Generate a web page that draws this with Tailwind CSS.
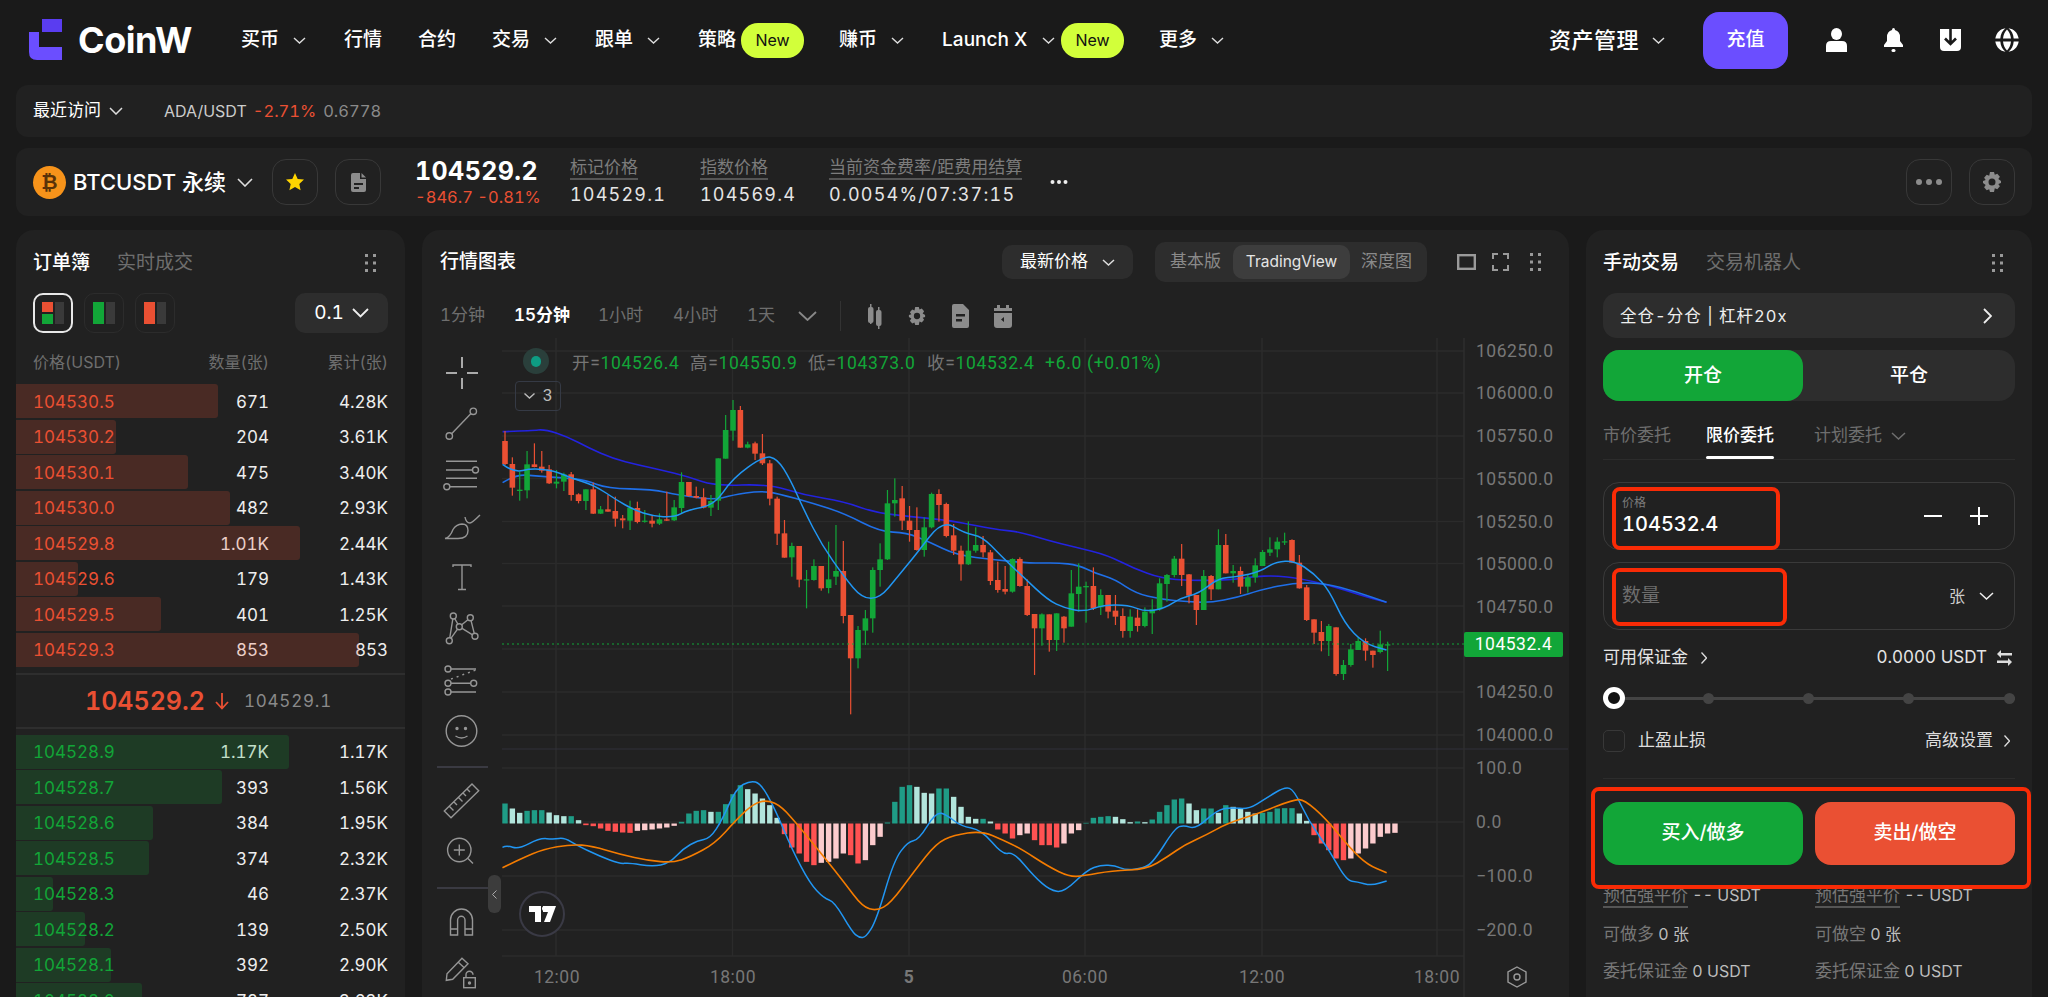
<!DOCTYPE html>
<html lang="zh-CN">
<head>
    <meta charset="UTF-8">
    <title>BTCUSDT 永续 - CoinW</title>
    <script src="https://cdn.jsdelivr.net/npm/@tailwindcss/browser@4"></script>
</head>
<body class="h-[997px] overflow-hidden bg-[#1a1a1a] text-white tabular-nums font-[Inter,'Noto_Sans_CJK_SC',sans-serif]">

    <!-- top nav -->
    <header class="flex h-[80px] items-center pl-[28px] pr-[29px] text-[19px] font-medium whitespace-nowrap">
        <svg class="h-[42px] w-[35px] shrink-0" viewBox="0 0 35 42"><path fill="#5a3df0" d="M14 0h20v13H14z"/><path fill="#6b4eff" d="M1 13h10v15h23v13H9q-8 0-8-8z"/></svg>
        <span class="ml-[15px] w-[113px] text-[36px] font-bold tracking-[-0.5px]">CoinW</span>
        <span class="ml-[50px]">买币</span>
        <svg class="ml-[14px] h-[7px] w-[13px]" viewBox="0 0 13 7" fill="none" stroke="#ddd" stroke-width="1.4"><path d="M1 1l5.500 5 5.500-5"/></svg>
        <span class="ml-[38px]">行情</span>
        <span class="ml-[36px]">合约</span>
        <span class="ml-[36px]">交易</span>
        <svg class="ml-[14px] h-[7px] w-[13px]" viewBox="0 0 13 7" fill="none" stroke="#ddd" stroke-width="1.4"><path d="M1 1l5.500 5 5.500-5"/></svg>
        <span class="ml-[38px]">跟单</span>
        <svg class="ml-[14px] h-[7px] w-[13px]" viewBox="0 0 13 7" fill="none" stroke="#ddd" stroke-width="1.4"><path d="M1 1l5.500 5 5.500-5"/></svg>
        <span class="ml-[38px]">策略</span>
        <span class="ml-[5px] flex h-[35px] w-[63px] items-center justify-center rounded-[17px] bg-[#d2ff3a] text-[16px] font-normal text-[#111]">New</span>
        <span class="ml-[35px]">赚币</span>
        <svg class="ml-[14px] h-[7px] w-[13px]" viewBox="0 0 13 7" fill="none" stroke="#ddd" stroke-width="1.4"><path d="M1 1l5.500 5 5.500-5"/></svg>
        <span class="ml-[38px] w-[92px] text-[19px]">Launch X</span>
        <svg class="ml-[8px] h-[7px] w-[13px]" viewBox="0 0 13 7" fill="none" stroke="#ddd" stroke-width="1.4"><path d="M1 1l5.500 5 5.500-5"/></svg>
        <span class="ml-[6px] flex h-[35px] w-[63px] items-center justify-center rounded-[17px] bg-[#d2ff3a] text-[16px] font-normal text-[#111]">New</span>
        <span class="ml-[35px]">更多</span>
        <svg class="ml-[14px] h-[7px] w-[13px]" viewBox="0 0 13 7" fill="none" stroke="#ddd" stroke-width="1.4"><path d="M1 1l5.500 5 5.500-5"/></svg>

        <span class="ml-auto w-[90px] text-[22px] tracking-[0.5px]">资产管理</span>
        <svg class="ml-[13px] h-[7px] w-[13px]" viewBox="0 0 13 7" fill="none" stroke="#ddd" stroke-width="1.4"><path d="M1 1l5.500 5 5.500-5"/></svg>
        <button class="ml-[38px] h-[57px] w-[85px] rounded-[16px] bg-[#6b4eff] text-[19px]">充值</button>
        <svg class="ml-[38px] h-[24px] w-[21px]" viewBox="0 0 21 24" fill="#fff"><ellipse cx="10.500" cy="6" rx="5.500" ry="6"/><path d="M0 24v-6q0-5 5-5h11q5 0 5 5v6z"/></svg>
        <svg class="ml-[36px] h-[24px] w-[21px]" viewBox="0 0 21 24" fill="#fff"><path d="M10.500 0q1.500 0 1.500 2 5 1.500 5 7v4l3 4v2H1v-2l3-4V9q0-5.500 5-7 0-2 1.500-2z"/><rect x="8.500" y="21" width="4" height="3" rx="1.500"/></svg>
        <svg class="ml-[36px] h-[22px] w-[21px]" viewBox="0 0 21 22"><path fill="#fff" d="M0 0h21v18q0 4-4 4H4q-4 0-4-4z"/><path fill="none" stroke="#1a1a1a" stroke-width="2.600" d="M10.500 0v14M5 9.500l5.500 5.500 5.500-5.500"/></svg>
        <svg class="ml-[34px] h-[24px] w-[24px]" viewBox="0 0 24 24" fill="#fff"><path d="M10.500 0.200C5 1 1.500 4.500 0.300 10.500h5C5.700 6 7.500 2.500 10.500 0.200zM13.500 0.200c3 2.300 4.800 5.800 5.200 10.300h5C22.500 4.500 19 1 13.500 0.200zM8 10.500h8C15.600 6.500 14 3.500 12 1.500 10 3.500 8.400 6.500 8 10.500zM0.300 13.500C1.500 19.500 5 23 10.500 23.800 7.500 21.500 5.700 18 5.300 13.500zM8 13.500c.4 4 2 7 4 9 2-2 3.600-5 4-9zM18.700 13.500c-.4 4.500-2.200 8-5.200 10.300 5.500-.8 9-4.300 10.200-10.300z"/></svg>
    </header>

    <!-- recent -->
    <div class="mx-4 mt-[5px] flex h-[52px] items-center rounded-xl bg-[#212121] pl-[17px] text-[17px] whitespace-nowrap">
        <span>最近访问</span>
        <svg class="ml-[8px] h-[8px] w-[14px]" viewBox="0 0 14 8" fill="none" stroke="#ddd" stroke-width="1.5"><path d="M1 1l6 6 6-6"/></svg>
        <span class="ml-[41px] text-[16px] text-[#ccc]">ADA/USDT</span>
        <span class="ml-[6px] text-[16.500px] text-[#ea5033]">-2.71%</span>
        <span class="ml-[7px] text-[16.500px] text-[#8a8a8a]">0.6778</span>
    </div>

    <!-- ticker -->
    <div class="mx-4 mt-[11px] flex h-[68px] items-center rounded-xl bg-[#212121] pl-[17px] pr-[17px] whitespace-nowrap">
        <span class="flex h-[33px] w-[33px] items-center justify-center rounded-full bg-[#f7931a] text-[20px] font-bold text-[#5a3208] font-[Liberation_Sans,DejaVu_Sans,sans-serif]">₿</span>
        <span class="ml-[7px] w-[156px] text-[22px] font-medium">BTCUSDT 永续</span>
        <svg class="ml-[8px] h-[9px] w-[16px]" viewBox="0 0 16 9" fill="none" stroke="#ddd" stroke-width="1.6"><path d="M1 1l7 7 7-7"/></svg>
        <span class="ml-[19px] flex h-[46px] w-[46px] items-center justify-center rounded-[14px] border border-[#383838]">
            <svg class="h-[18px] w-[18px]" viewBox="0 0 18 18" fill="#ffd400"><path d="M9 0l2.700 5.900 6.300.7-4.700 4.300 1.300 6.400L9 14.100l-5.600 3.200 1.300-6.400L0 6.600l6.300-.7z"/></svg>
        </span>
        <span class="ml-[17px] flex h-[46px] w-[46px] items-center justify-center rounded-[14px] border border-[#383838]">
            <svg class="h-[19px] w-[15px]" viewBox="0 0 15 19" fill="#8c8c8c"><path d="M2 0h7v6h6v11q0 2-2 2H2q-2 0-2-2V2q0-2 2-2zM3 10v2h9v-2zM3 14v2h5v-2z" fill-rule="evenodd"/><path d="M10.500 0L15 4.500h-4.500z"/></svg>
        </span>
        <div class="-ml-[1px] pl-[35px] w-[160px]">
            <div class="text-[25px] leading-[30px] font-bold tracking-[0.4px]">104529.2</div>
            <div class="text-[16.500px] leading-[22px] text-[#ea5033]">-846.7 -0.81%</div>
        </div>
        <div class="ml-[30px] w-[95px]">
            <div class="w-fit border-b-2 border-[#555] text-[17px] leading-[21px] text-[#7c7c7c]">标记价格</div>
            <div class="mt-[3px] text-[18px] leading-[24px] tracking-[1.2px] text-[#e5e5e5]">104529.1</div>
        </div>
        <div class="ml-[35px] w-[95px]">
            <div class="w-fit border-b-2 border-[#555] text-[17px] leading-[21px] text-[#7c7c7c]">指数价格</div>
            <div class="mt-[3px] text-[18px] leading-[24px] tracking-[1.2px] text-[#e5e5e5]">104569.4</div>
        </div>
        <div class="ml-[34px] w-[221px]">
            <div class="w-fit border-b-2 border-[#555] text-[17px] leading-[21px] text-[#7c7c7c]">当前资金费率/距费用结算</div>
            <div class="mt-[3px] text-[18px] leading-[24px] tracking-[1.2px] text-[#e5e5e5]">0.0054%/07:37:15</div>
        </div>
        <svg class="h-[4px] w-[18px]" viewBox="0 0 18 4" fill="#eee"><circle cx="2.500" cy="2" r="2"/><circle cx="9" cy="2" r="2"/><circle cx="15.500" cy="2" r="2"/></svg>
        <span class="ml-auto flex h-[46px] w-[46px] items-center justify-center rounded-[14px] border border-[#383838]">
            <svg class="h-[6px] w-[28px]" viewBox="0 0 28 6" fill="#8c8c8c"><circle cx="4" cy="3" r="3"/><circle cx="14" cy="3" r="3"/><circle cx="24" cy="3" r="3"/></svg>
        </span>
        <span class="ml-[17px] flex h-[46px] w-[46px] items-center justify-center rounded-[14px] border border-[#383838]">
            <svg class="h-[20px] w-[20px]" viewBox="0 0 20 20" fill="#8c8c8c"><path fill-rule="evenodd" d="M8 0h4l.8 2.800 2.500-1.100 2.600 3-1.600 2.400L19 9v2l-2.700.9 1.600 2.400-2.600 3-2.500-1.100L12 20H8l-.8-2.800-2.500 1.100-2.600-3 1.600-2.400L1 11V9l2.700-.9-1.600-2.400 2.600-3 2.500 1.100zM10 6.500a3.500 3.500 0 100 7 3.500 3.500 0 000-7z"/></svg>
        </span>
    </div>

    <!-- main -->
    <main class="mx-4 mt-[14px] flex h-[767px] gap-[17px]">

        <!-- order book -->
        <section class="w-[389px] shrink-0 overflow-hidden rounded-t-[18px] bg-[#212121]">
            <div class="flex h-[63px] items-center px-[17px] pt-[3px] text-[19px]">
                <span class="font-medium">订单簿</span>
                <span class="ml-[27px] text-[#6e6e6e]">实时成交</span>
                <svg class="ml-auto mr-[12px] h-[18px] w-[11px]" viewBox="0 0 11 18" fill="#999"><rect width="3" height="3"/><rect x="8" width="3" height="3"/><rect y="7.500" width="3" height="3"/><rect x="8" y="7.500" width="3" height="3"/><rect y="15" width="3" height="3"/><rect x="8" y="15" width="3" height="3"/></svg>
            </div>
            <div class="flex h-[40px] items-center px-[17px]">
                <span class="flex h-[40px] w-[40px] items-center justify-center rounded-[10px] border-2 border-[#e8e8e8]">
                    <svg class="h-[22px] w-[22px]" viewBox="0 0 22 22"><rect width="11" height="10" fill="#ea5033"/><rect y="12" width="11" height="10" fill="#12a638"/><rect x="13" width="9" height="22" fill="#3a3a3a"/></svg>
                </span>
                <span class="ml-[11px] flex h-[40px] w-[40px] items-center justify-center rounded-[10px] border border-[#2c2c2c]">
                    <svg class="h-[22px] w-[22px]" viewBox="0 0 22 22"><rect width="11" height="22" fill="#12a638"/><rect x="13" width="9" height="22" fill="#3a3a3a"/></svg>
                </span>
                <span class="ml-[11px] flex h-[40px] w-[40px] items-center justify-center rounded-[10px] border border-[#2c2c2c]">
                    <svg class="h-[22px] w-[22px]" viewBox="0 0 22 22"><rect width="11" height="22" fill="#ea5033"/><rect x="13" width="9" height="22" fill="#3a3a3a"/></svg>
                </span>
                <span class="ml-auto flex h-[40px] w-[93px] items-center justify-center gap-[8px] rounded-[10px] bg-[#2d2d2d] text-[19px]">0.1
                    <svg class="h-[10px] w-[17px]" viewBox="0 0 17 10" fill="none" stroke="#eee" stroke-width="1.800"><path d="M1 1l7.500 7.500L16 1"/></svg>
                </span>
            </div>
            <div class="grid h-[51px] grid-cols-[1fr_96px_119px] items-center px-[17px] pt-[7px] text-[16px] text-[#6e6e6e]">
                <span>价格(USDT)</span><span class="text-right">数量(张)</span><span class="text-right">累计(张)</span>
            </div>

            <div class="text-[17px] text-[#eee]">
                <div class="relative mb-[1.500px] grid h-[34px] grid-cols-[1fr_96px_119px] items-center px-[17px] pt-[3px]"><span class="text-[#ea5033]">104530.5</span><span class="text-right">671</span><span class="text-right">4.28K</span><i class="absolute inset-y-0 left-0 rounded-r-[3px] bg-[#ea5033]/20" style="width:202px"></i></div>
                <div class="relative mb-[1.500px] grid h-[34px] grid-cols-[1fr_96px_119px] items-center px-[17px] pt-[3px]"><span class="text-[#ea5033]">104530.2</span><span class="text-right">204</span><span class="text-right">3.61K</span><i class="absolute inset-y-0 left-0 rounded-r-[3px] bg-[#ea5033]/20" style="width:100px"></i></div>
                <div class="relative mb-[1.500px] grid h-[34px] grid-cols-[1fr_96px_119px] items-center px-[17px] pt-[3px]"><span class="text-[#ea5033]">104530.1</span><span class="text-right">475</span><span class="text-right">3.40K</span><i class="absolute inset-y-0 left-0 rounded-r-[3px] bg-[#ea5033]/20" style="width:172px"></i></div>
                <div class="relative mb-[1.500px] grid h-[34px] grid-cols-[1fr_96px_119px] items-center px-[17px] pt-[3px]"><span class="text-[#ea5033]">104530.0</span><span class="text-right">482</span><span class="text-right">2.93K</span><i class="absolute inset-y-0 left-0 rounded-r-[3px] bg-[#ea5033]/20" style="width:214px"></i></div>
                <div class="relative mb-[1.500px] grid h-[34px] grid-cols-[1fr_96px_119px] items-center px-[17px] pt-[3px]"><span class="text-[#ea5033]">104529.8</span><span class="text-right">1.01K</span><span class="text-right">2.44K</span><i class="absolute inset-y-0 left-0 rounded-r-[3px] bg-[#ea5033]/20" style="width:284px"></i></div>
                <div class="relative mb-[1.500px] grid h-[34px] grid-cols-[1fr_96px_119px] items-center px-[17px] pt-[3px]"><span class="text-[#ea5033]">104529.6</span><span class="text-right">179</span><span class="text-right">1.43K</span><i class="absolute inset-y-0 left-0 rounded-r-[3px] bg-[#ea5033]/20" style="width:62px"></i></div>
                <div class="relative mb-[1.500px] grid h-[34px] grid-cols-[1fr_96px_119px] items-center px-[17px] pt-[3px]"><span class="text-[#ea5033]">104529.5</span><span class="text-right">401</span><span class="text-right">1.25K</span><i class="absolute inset-y-0 left-0 rounded-r-[3px] bg-[#ea5033]/20" style="width:145px"></i></div>
                <div class="relative grid h-[34px] grid-cols-[1fr_96px_119px] items-center px-[17px] pt-[3px]"><span class="text-[#ea5033]">104529.3</span><span class="text-right">853</span><span class="text-right">853</span><i class="absolute inset-y-0 left-0 rounded-r-[3px] bg-[#ea5033]/20" style="width:343px"></i></div>

                <div class="mt-[6px] flex h-[56px] items-center justify-center border-y-2 border-[#2e2e2e] pr-[4px] pt-[2px]">
                    <span class="text-[25px] font-semibold text-[#ea5033]">104529.2</span>
                    <svg class="ml-[10px] h-[17px] w-[14px]" viewBox="0 0 14 17" fill="none" stroke="#ea5033" stroke-width="1.800"><path d="M7 0v15M1 9l6 6.500L13 9"/></svg>
                    <span class="ml-[15px] text-[17px] tracking-[0.8px] text-[#8a8a8a]">104529.1</span>
                </div>

                <div class="relative mb-[1.500px] mt-[6px] grid h-[34px] grid-cols-[1fr_96px_119px] items-center px-[17px] pt-[3px]"><span class="text-[#12a638]">104528.9</span><span class="text-right">1.17K</span><span class="text-right">1.17K</span><i class="absolute inset-y-0 left-0 rounded-r-[3px] bg-[#12a638]/20" style="width:273px"></i></div>
                <div class="relative mb-[1.500px] grid h-[34px] grid-cols-[1fr_96px_119px] items-center px-[17px] pt-[3px]"><span class="text-[#12a638]">104528.7</span><span class="text-right">393</span><span class="text-right">1.56K</span><i class="absolute inset-y-0 left-0 rounded-r-[3px] bg-[#12a638]/20" style="width:206px"></i></div>
                <div class="relative mb-[1.500px] grid h-[34px] grid-cols-[1fr_96px_119px] items-center px-[17px] pt-[3px]"><span class="text-[#12a638]">104528.6</span><span class="text-right">384</span><span class="text-right">1.95K</span><i class="absolute inset-y-0 left-0 rounded-r-[3px] bg-[#12a638]/20" style="width:137px"></i></div>
                <div class="relative mb-[1.500px] grid h-[34px] grid-cols-[1fr_96px_119px] items-center px-[17px] pt-[3px]"><span class="text-[#12a638]">104528.5</span><span class="text-right">374</span><span class="text-right">2.32K</span><i class="absolute inset-y-0 left-0 rounded-r-[3px] bg-[#12a638]/20" style="width:133px"></i></div>
                <div class="relative mb-[1.500px] grid h-[34px] grid-cols-[1fr_96px_119px] items-center px-[17px] pt-[3px]"><span class="text-[#12a638]">104528.3</span><span class="text-right">46</span><span class="text-right">2.37K</span><i class="absolute inset-y-0 left-0 rounded-r-[3px] bg-[#12a638]/20" style="width:37px"></i></div>
                <div class="relative mb-[1.500px] grid h-[34px] grid-cols-[1fr_96px_119px] items-center px-[17px] pt-[3px]"><span class="text-[#12a638]">104528.2</span><span class="text-right">139</span><span class="text-right">2.50K</span><i class="absolute inset-y-0 left-0 rounded-r-[3px] bg-[#12a638]/20" style="width:69px"></i></div>
                <div class="relative mb-[1.500px] grid h-[34px] grid-cols-[1fr_96px_119px] items-center px-[17px] pt-[3px]"><span class="text-[#12a638]">104528.1</span><span class="text-right">392</span><span class="text-right">2.90K</span><i class="absolute inset-y-0 left-0 rounded-r-[3px] bg-[#12a638]/20" style="width:95px"></i></div>
                <div class="relative grid h-[34px] grid-cols-[1fr_96px_119px] items-center px-[17px] pt-[3px]"><span class="text-[#12a638]">104528.0</span><span class="text-right">727</span><span class="text-right">3.63K</span><i class="absolute inset-y-0 left-0 rounded-r-[3px] bg-[#12a638]/20" style="width:126px"></i></div>
            </div>
        </section>

        <!-- chart panel -->
        <section class="flex w-[1147px] shrink-0 flex-col overflow-hidden rounded-t-[18px] bg-[#212121]">
            <div class="flex h-[64px] shrink-0 items-center pl-[18px] whitespace-nowrap">
                <span class="pt-[1px] text-[19px] font-medium">行情图表</span>
                <span class="ml-auto flex h-[34px] w-[131px] items-center justify-center gap-[14px] rounded-[10px] bg-[#2d2d2d] text-[17px]">最新价格
                    <svg class="h-[7px] w-[13px]" viewBox="0 0 13 7" fill="none" stroke="#ddd" stroke-width="1.5"><path d="M1 1l5.500 5 5.500-5"/></svg>
                </span>
                <div class="ml-[22px] flex h-[40px] w-[272px] items-center rounded-[10px] bg-[#2d2d2d] pl-[3px] text-[17px] text-[#8a8a8a]">
                    <span class="w-[75px] pl-[12px]">基本版</span>
                    <span class="flex h-[34px] w-[117px] items-center justify-center rounded-[10px] bg-[#3d3d3d] text-[15.500px] text-[#e5e5e5]">TradingView</span>
                    <span class="ml-[11px]">深度图</span>
                </div>
                <svg class="ml-[30px] h-[16px] w-[19px]" viewBox="0 0 19 16" fill="none" stroke="#9a9a9a" stroke-width="2.400"><rect x="1.200" y="1.200" width="16.600" height="13.600"/></svg>
                <svg class="ml-[16px] h-[18px] w-[17px]" viewBox="0 0 17 18" fill="none" stroke="#9a9a9a" stroke-width="2"><path d="M6 1H1v5M11 1h5v5M6 17H1v-5M11 17h5v-5"/></svg>
                <svg class="ml-[21px] mr-[28px] h-[18px] w-[11px]" viewBox="0 0 11 18" fill="#999"><rect width="3" height="3"/><rect x="8" width="3" height="3"/><rect y="7.500" width="3" height="3"/><rect x="8" y="7.500" width="3" height="3"/><rect y="15" width="3" height="3"/><rect x="8" y="15" width="3" height="3"/></svg>
            </div>

            <div class="flex h-[44px] shrink-0 items-center pl-[18px] text-[17px] text-[#6e6e6e] whitespace-nowrap">
                <span class="w-[44px]">1分钟</span>
                <span class="ml-[30px] w-[56px] font-semibold text-white">15分钟</span>
                <span class="ml-[28px] w-[45px]">1小时</span>
                <span class="ml-[30px] w-[44px]">4小时</span>
                <span class="ml-[30px] w-[27px]">1天</span>
                <svg class="ml-[24px] h-[10px] w-[19px]" viewBox="0 0 19 10" fill="none" stroke="#888" stroke-width="1.800"><path d="M1 1l8.500 8L18 1"/></svg>
                <i class="ml-[23px] h-[30px] w-px bg-[#333]"></i>
                <svg class="ml-[27px] h-[25px] w-[14px]" viewBox="0 0 14 25" fill="#8c8c8c"><rect x="2" width="1.500" height="20"/><rect width="5.500" height="16" x="0" y="3" rx="2"/><rect x="10" y="3" width="1.500" height="22"/><rect x="8" y="6" width="5.500" height="16" rx="2"/></svg>
                <svg class="ml-[26px] h-[18px] w-[18px]" viewBox="0 0 20 20" fill="#8c8c8c"><path fill-rule="evenodd" d="M8 0h4l.8 2.800 2.500-1.100 2.600 3-1.600 2.400L19 9v2l-2.700.9 1.600 2.400-2.600 3-2.500-1.100L12 20H8l-.8-2.800-2.500 1.100-2.600-3 1.600-2.400L1 11V9l2.700-.9-1.600-2.400 2.600-3 2.500 1.100zM10 6.500a3.500 3.500 0 100 7 3.500 3.500 0 000-7z"/></svg>
                <svg class="ml-[26px] h-[24px] w-[17px]" viewBox="0 0 17 24" fill="#8c8c8c"><path fill-rule="evenodd" d="M2 0h9l6 6v16q0 2-2 2H2q-2 0-2-2V2q0-2 2-2zM4 10v2.500h9V10zM4 15v2.500h6V15z"/></svg>
                <svg class="ml-[25px] h-[23px] w-[18px]" viewBox="0 0 18 23" fill="#8c8c8c"><rect x="3" width="3" height="5"/><rect x="12" width="3" height="5"/><path d="M0 3h18v3H0z"/><path fill-rule="evenodd" d="M0 8h18v12q0 3-3 3H3q-3 0-3-3zM10 12l-3 2.500 3 2.500z"/></svg>
            </div>

            <div class="flex min-h-0 flex-1">
                <!-- drawing tools -->
                <div class="relative flex w-[80px] shrink-0 flex-col items-center pt-[10px]">
                    <svg class="h-[50px] w-[50px] shrink-0" viewBox="0 0 50 50" fill="none" stroke="#d8d8d8" stroke-width="1.500"><path d="M25 9v11M25 30v11M9 25h11M30 25h11"/></svg>
                    <svg class="h-[50px] w-[50px] shrink-0" viewBox="0 0 50 50" fill="none" stroke="#969696" stroke-width="1.400"><circle cx="36.300" cy="13.300" r="3.200"/><circle cx="12.300" cy="38" r="3.200"/><path d="M34 15.600L14.600 35.700"/></svg>
                    <svg class="h-[50px] w-[50px] shrink-0" viewBox="0 0 50 50" fill="none" stroke="#969696" stroke-width="1.400"><path d="M9 13.300h31M9 22h26.500M9 30.300h31M13 38.700h27"/><circle cx="38.500" cy="22" r="3"/><circle cx="9.800" cy="38.700" r="3"/></svg>
                    <svg class="mt-[4px] h-[50px] w-[50px] shrink-0" viewBox="0 0 50 50" fill="none" stroke="#969696" stroke-width="1.400"><path d="M8 36.500q5-1 8-9 3-5 9-5.500 6 0 6 6.500 0 8-10 8z"/><path d="M28 15q1 6 5 6 2 0 10-8"/></svg>
                    <svg class="h-[50px] w-[50px] shrink-0" viewBox="0 0 50 50" fill="none" stroke="#969696" stroke-width="1.400"><path d="M16 15v-2h18v2M25 13v24.500M21 37.500h8"/></svg>
                    <svg class="h-[50px] w-[50px] shrink-0" viewBox="0 0 50 50" fill="none" stroke="#969696" stroke-width="1.400"><path d="M16.300 14L12.300 38.700M16.300 14l6 10.700M12.300 38.700l10-14M22.300 24.700l11-9M22.300 24.700l15.700 9.600M33.300 15.700l4.700 18.600"/><circle cx="16.300" cy="14" r="3" fill="#212121"/><circle cx="33.300" cy="15.700" r="3" fill="#212121"/><circle cx="22.300" cy="24.700" r="3" fill="#212121"/><circle cx="38" cy="34.300" r="3" fill="#212121"/><circle cx="12.300" cy="38.700" r="3" fill="#212121"/></svg>
                    <svg class="mt-[3px] h-[50px] w-[50px] shrink-0" viewBox="0 0 50 50" fill="none" stroke="#969696" stroke-width="1.400"><path d="M14 14h25M14 28.300h19.500M14 37h25"/><path d="M14 24l25-9" stroke-dasharray="2 4"/><circle cx="11" cy="14" r="3"/><circle cx="11" cy="28.300" r="3"/><circle cx="36.700" cy="28.300" r="3"/><circle cx="11" cy="37" r="3"/></svg>
                    <svg class="mt-[1px] h-[50px] w-[50px] shrink-0" viewBox="0 0 50 50" fill="none" stroke="#969696" stroke-width="1.400"><circle cx="24.500" cy="25" r="15.300"/><path d="M18.500 30q6 4 12 0"/><circle cx="20" cy="22.500" r="1" fill="#969696"/><circle cx="28.500" cy="22.500" r="1" fill="#969696"/></svg>
                    <i class="mt-[10px] h-[2px] w-[51px] shrink-0 bg-[#3a3a42]"></i>
                    <svg class="mt-[7px] h-[50px] w-[50px] shrink-0" viewBox="0 0 50 50" fill="none" stroke="#969696" stroke-width="1.400"><path d="M35 9l6.700 6.700L14 42.700 7.300 36zM30 14l3 3M26 18l3 3M21.500 22.500l4 4M17 27l3 3M12.500 31.500l4 4"/></svg>
                    <svg class="h-[50px] w-[50px] shrink-0" viewBox="0 0 50 50" fill="none" stroke="#969696" stroke-width="1.400"><circle cx="22.300" cy="25" r="11.700"/><path d="M22.300 19.500v11M16.800 25h11M31 33.500l5 5"/></svg>
                    <i class="mt-[12px] h-[2px] w-[51px] shrink-0 bg-[#3a3a42]"></i>
                    <svg class="mt-[7px] h-[50px] w-[50px] shrink-0" viewBox="0 0 50 50" fill="none" stroke="#969696" stroke-width="1.400"><path d="M13.500 39V24a11 11 0 0122 0v15H28V24a3.700 3.700 0 00-7.400 0v15zM13.500 33h7M28 33h7.500"/></svg>
                    <svg class="mt-[2px] h-[50px] w-[50px] shrink-0" viewBox="0 0 50 50" fill="none" stroke="#969696" stroke-width="1.400"><path d="M25 10.300l6 5.400-15.300 15.600-6.400 1 .7-6.600zM21 14l6 5.500"/><rect x="26.700" y="29.700" width="11.600" height="10"/><path d="M29 29.700v-3a3.500 3.500 0 017 0"/><circle cx="32.500" cy="35" r="1" fill="#969696"/></svg>
                    <span class="absolute left-[66px] top-[537px] flex h-[38px] w-[13px] items-center justify-center rounded-[6px] bg-[#3c3c3c]">
                        <svg class="h-[9px] w-[5px]" viewBox="0 0 5 9" fill="none" stroke="#aaa" stroke-width="1"><path d="M4.500 .5L.5 4.500l4 4"/></svg>
                    </span>
                </div>

                <!-- chart canvas -->
                <div class="relative min-w-0 flex-1">
                    <svg id="chart" class="absolute left-0 top-0 font-[Roboto,sans-serif]" width="1066" height="659" viewBox="502 338 1066 659" fill="none"></svg>

                    <span class="absolute left-[21px] top-[10px] flex h-[26px] w-[26px] items-center justify-center rounded-full bg-[#2a3f3b]">
                        <i class="h-[11px] w-[10px] rounded-full bg-[#0e9c83]"></i>
                    </span>
                    <div class="absolute left-[70px] top-[14px] flex text-[17.500px] leading-[22px] tracking-[0.7px] text-[#12a638] font-[Roboto,'Noto_Sans_CJK_SC',sans-serif] whitespace-nowrap">
                        <span class="w-[118px]"><b class="font-normal text-[#757575]">开=</b>104526.4</span>
                        <span class="w-[118px]"><b class="font-normal text-[#757575]">高=</b>104550.9</span>
                        <span class="w-[119px]"><b class="font-normal text-[#757575]">低=</b>104373.0</span>
                        <span class="w-[118px]"><b class="font-normal text-[#757575]">收=</b>104532.4</span>
                        <span>+6.0 (+0.01%)</span>
                    </div>
                    <span class="absolute left-[13px] top-[43px] flex h-[30px] w-[46px] items-center justify-center gap-[8px] rounded-[4px] border border-[#353a45] text-[17px] text-[#bbb] font-[Roboto,sans-serif]">
                        <svg class="h-[6px] w-[11px]" viewBox="0 0 11 6" fill="none" stroke="#bbb" stroke-width="1.400"><path d="M.5.5l5 4.500 5-4.500"/></svg>3
                    </span>

                    <span class="absolute left-[962px] top-[294px] flex h-[25px] w-[99px] items-center justify-center rounded-[2px] bg-[#12a638] text-[17.500px] tracking-[0.5px] font-[Roboto,sans-serif]">104532.4</span>

                    <span class="absolute left-[17px] top-[553px] flex h-[46px] w-[46px] items-center justify-center rounded-full border-2 border-[#3a3a45] bg-[#212121]">
                        <svg class="h-[16px] w-[27px]" viewBox="0 0 27 16" fill="#fff"><path d="M0 0h12v16H6V6H0zM14 0h13l-6 16h-6l4-10h-5z"/><circle cx="15.500" cy="2.500" r="2.500"/></svg>
                    </span>
                </div>
            </div>
        </section>

        <!-- order form -->
        <section class="relative w-[446px] shrink-0 overflow-hidden rounded-t-[18px] bg-[#212121] px-[17px] whitespace-nowrap">
            <div class="flex h-[63px] items-center pt-[3px] text-[19px]">
                <span class="font-medium">手动交易</span>
                <span class="ml-[27px] text-[#6e6e6e]">交易机器人</span>
                <svg class="ml-auto mr-[12px] h-[18px] w-[11px]" viewBox="0 0 11 18" fill="#999"><rect width="3" height="3"/><rect x="8" width="3" height="3"/><rect y="7.500" width="3" height="3"/><rect x="8" y="7.500" width="3" height="3"/><rect y="15" width="3" height="3"/><rect x="8" y="15" width="3" height="3"/></svg>
            </div>
            <div class="flex h-[45px] items-center rounded-[14px] bg-[#2d2d2d] pl-[17px] pr-[23px] pt-[1px] text-[16.500px] tracking-[1px] text-[#eee]">
                <span>全仓-分仓 | 杠杆20x</span>
                <svg class="ml-auto h-[16px] w-[9px]" viewBox="0 0 9 16" fill="none" stroke="#eee" stroke-width="1.800"><path d="M1 1l7 7-7 7"/></svg>
            </div>
            <div class="mt-[12px] flex h-[51px] rounded-[16px] bg-[#2d2d2d] text-[19px] font-medium">
                <span class="flex w-[200px] items-center justify-center rounded-[16px] bg-[#12a638] pt-[1px]">开仓</span>
                <span class="flex flex-1 items-center justify-center pt-[1px]">平仓</span>
            </div>
            <div class="flex h-[59px] items-center border-b border-[#2c2c2c] pt-[12px] text-[17px] text-[#6e6e6e]">
                <span>市价委托</span>
                <span class="relative ml-[35px] flex h-full items-center font-medium text-white">限价委托<i class="absolute bottom-0 left-0 h-[3px] w-full rounded-[2px] bg-white"></i></span>
                <span class="ml-[40px]">计划委托</span>
                <svg class="ml-[9px] h-[8px] w-[15px]" viewBox="0 0 15 8" fill="none" stroke="#6e6e6e" stroke-width="1.500"><path d="M1 1l6.500 6L14 1"/></svg>
            </div>
            <div class="mt-[22px] flex h-[68px] items-center rounded-[16px] border border-[#3a3a3a] pl-[18px] pr-[26px]">
                <div>
                    <div class="text-[12px] leading-[16px] text-[#7c7c7c]">价格</div>
                    <div class="pt-[1px] text-[20px] leading-[25px] font-medium">104532.4</div>
                </div>
                <svg class="ml-auto h-[2px] w-[18px]" viewBox="0 0 18 2" fill="#fff"><rect width="18" height="2"/></svg>
                <svg class="ml-[28px] h-[18px] w-[18px]" viewBox="0 0 18 18" fill="#fff"><path d="M8 0h2v8h8v2h-8v8H8v-8H0V8h8z"/></svg>
            </div>
            <div class="mt-[12px] flex h-[68px] items-center rounded-[16px] border border-[#3a3a3a] pl-[18px] pr-[20px]">
                <span class="text-[19px] text-[#6e6e6e]">数量</span>
                <span class="ml-auto text-[16px] text-[#ccc]">张</span>
                <svg class="ml-[14px] h-[8px] w-[15px]" viewBox="0 0 15 8" fill="none" stroke="#eee" stroke-width="1.500"><path d="M1 1l6.500 6L14 1"/></svg>
            </div>
            <div class="mt-[18px] flex h-[20px] items-center text-[17px] text-[#e5e5e5]">
                <span>可用保证金</span>
                <svg class="ml-[13px] h-[12px] w-[6px]" viewBox="0 0 6 12" fill="none" stroke="#ddd" stroke-width="1.300"><path d="M.5.5l5 5.500-5 5.500"/></svg>
                <span class="ml-auto">0.0000 USDT</span>
                <svg class="ml-[10px] mr-[3px] h-[16px] w-[15px]" viewBox="0 0 15 16" fill="#ddd"><path d="M4 0v3h11v2.500H4V8L0 4zM11 8v2.500H0V13h11v3l4-4z"/></svg>
            </div>
            <div class="relative mt-[19px] flex h-[22px] items-center">
                <i class="absolute inset-x-0 h-[3px] bg-[#444]"></i>
                <i class="relative h-[22px] w-[22px] rounded-full border-[5px] border-white bg-[#111]"></i>
                <i class="relative ml-[78px] h-[11px] w-[11px] rounded-full bg-[#444]"></i>
                <i class="relative ml-[89px] h-[11px] w-[11px] rounded-full bg-[#444]"></i>
                <i class="relative ml-[89px] h-[11px] w-[11px] rounded-full bg-[#444]"></i>
                <i class="relative ml-[90px] h-[11px] w-[11px] rounded-full bg-[#444]"></i>
            </div>
            <div class="mt-[21px] flex h-[22px] items-center text-[17px] text-[#ddd]">
                <i class="h-[22px] w-[22px] rounded-[5px] border border-[#383838]"></i>
                <span class="ml-[13px]">止盈止损</span>
                <span class="ml-auto">高级设置</span>
                <svg class="ml-[11px] mr-[5px] h-[12px] w-[6px]" viewBox="0 0 6 12" fill="none" stroke="#ddd" stroke-width="1.300"><path d="M.5.5l5 5.500-5 5.500"/></svg>
            </div>
            <div class="mt-[26px] h-px bg-[#2c2c2c]"></div>
            <div class="relative z-10 mt-[23px] flex h-[63px] gap-[12px] text-[19px] font-medium">
                <button class="flex-1 rounded-[16px] bg-[#12a638]">买入/做多</button>
                <button class="flex-1 rounded-[16px] bg-[#ea5033]">卖出/做空</button>
            </div>
            <div class="mt-[19px] grid grid-cols-[212px_1fr] gap-y-[15px] text-[16px] leading-[22px] text-[#bdbdbd]">
                <span><b class="inline-block border-b-2 border-[#555] text-[17px] font-normal text-[#777]">预估强平价</b> -- USDT</span>
                <span><b class="inline-block border-b-2 border-[#555] text-[17px] font-normal text-[#777]">预估强平价</b> -- USDT</span>
                <span><b class="text-[17px] font-normal text-[#777]">可做多</b> 0 张</span>
                <span><b class="text-[17px] font-normal text-[#777]">可做空</b> 0 张</span>
                <span><b class="text-[17px] font-normal text-[#777]">委托保证金</b> 0 USDT</span>
                <span><b class="text-[17px] font-normal text-[#777]">委托保证金</b> 0 USDT</span>
            </div>

            <!-- annotations -->
            <i class="absolute left-[26px] top-[257px] h-[63px] w-[168px] rounded-[8px] border-4 border-[#f92b06]"></i>
            <i class="absolute left-[26px] top-[338px] h-[58px] w-[175px] rounded-[8px] border-4 border-[#f92b06]"></i>
            <i class="absolute left-[5px] top-[557px] h-[102px] w-[440px] rounded-[8px] border-4 border-[#f92b06] bg-[#212121]"></i>
        </section>
    </main>

    <script>
        // read off the screenshot as y values, [wickTop, bodyTop, bodyBottom, wickBottom, up]
        const up = 1, dn = 0;
        const candlesA = [[603,633,702,705,dn],[682,702,773,797,dn],[725,779,783,812,up],[663,703,781,805,up],[640,703,711,712,dn],[663,710,722,728,dn],[705,718,760,762,dn],[720,755,761,775,up],[728,733,755,783,up],[726,733,795,812,dn],[790,793,813,820,dn],[778,778,813,840,up],[758,778,851,852,dn],[828,838,851,852,up],[795,838,845,845,dn],[800,843,866,890,dn],[855,865,871,895,dn],[812,833,872,900,up],[815,834,876,880,dn],[840,872,875,878,up],[858,872,881,892,dn],[850,868,881,885,up],[785,868,872,873,dn],[810,832,871,873,up],[727,756,834,850,up],[756,756,798,800,dn],[770,798,803,805,dn],[775,802,833,835,dn],[795,813,833,858,up],[685,685,812,840,up],[555,600,686,686,up],[510,540,602,632,up],[528,540,653,653,dn],[635,643,653,655,up],[635,640,671,690,dn],[612,670,700,705,dn],[690,700,806,826,dn],[800,806,911,945,dn],[870,910,983,983,dn],[938,948,982,1040,up],[948,948,1049,1072,dn],[1020,1048,1050,1135,up],[988,1008,1050,1052,up],[1008,1008,1075,1082,dn],[935,1048,1074,1090,up],[885,1023,1040,1065,up],[933,1023,1158,1180,dn],[1155,1155,1285,1453,dn],[1188,1200,1285,1315,up],[1140,1165,1202,1245,up],[1012,1020,1165,1208,up],[940,988,1020,1070,up],[780,820,988,990,up],[745,810,820,860,up],[768,805,872,900,dn],[828,872,900,935,dn],[832,900,960,962,dn],[862,892,960,980,up],[788,792,892,895,up],[778,792,825,875,dn],[818,822,918,922,dn],[882,916,962,975,dn],[947,962,1003,1052,dn],[874,962,1003,1005,up],[892,945,962,968,up],[918,945,967,982,dn],[960,967,1053,1065,dn],[995,1050,1080,1088,dn],[1008,1077,1085,1093,dn],[985,987,1085,1088,up],[982,987,1068,1070,dn],[1048,1068,1155,1158,dn],[1152,1152,1195,1335,dn],[1150,1153,1195,1247,up],[1153,1153,1230,1265,dn]];
        const candlesB = [[880,880,960,993,up],[888,890,925,968,dn],[750,820,920,920,up],[730,800,822,875,up],[785,798,802,908,up],[742,798,865,870,dn],[808,825,862,885,up],[825,825,875,895,dn],[825,872,890,915,dn],[865,888,933,953,dn],[868,890,933,953,up],[868,893,918,935,dn],[862,875,918,922,up],[838,868,880,942,up],[775,790,868,872,up],[762,765,792,845,up],[708,716,765,772,up],[672,716,765,798,dn],[762,763,827,850,dn],[825,825,870,915,dn],[750,768,870,870,up],[765,768,808,840,dn],[628,675,808,808,up],[642,675,760,760,dn],[735,753,760,788,up],[740,753,800,822,dn],[765,772,800,818,up],[715,736,772,788,up],[690,696,738,738,up],[652,688,698,708,up],[652,665,688,712,up],[638,664,667,675,up],[658,660,728,728,dn],[705,728,805,806,dn],[795,802,900,903,dn],[898,898,938,972,dn],[903,936,963,994,dn],[912,918,963,1008,up],[922,922,1062,1067,dn],[1020,1035,1062,1080,up],[972,988,1035,1040,up],[952,963,990,990,up],[955,963,992,1022,dn],[992,992,1005,1043,dn],[932,973,996,1000,up],[965,973,976,1053,up]];
        const candles = [...candlesA.map(c => [...c.slice(0, 4).map(v => 230 + v / 3), c[4]]), ...candlesB.map(c => [...c.slice(0, 4).map(v => 320 + v / 3), c[4]])];

        const RED = '#ea5033', GREEN = '#12a638';
        const STEP = 7.355, X0 = 505;
        let svg = '';

        // grid
        const gridY = [351, 393, 436, 478.5, 521.5, 563.5, 606, 649, 692, 735, 768, 822, 876, 930, 956];
        const gridX = [556, 732.5, 909, 1085, 1262, 1437];
        gridY.forEach(y => svg += `<path d="M502 ${y}H1464" stroke="#2b2b2b" stroke-width="1.500"/>`);
        gridX.forEach(x => svg += `<path d="M${x} 338V956" stroke="#2b2b2b" stroke-width="1.500"/>`);
        svg += '<path d="M502 749H1568" stroke="#30303a" stroke-width="1"/><path d="M1464 338V997" stroke="#2e2e2e" stroke-width="1.500"/>';

        // ma lines
        const z5 = p => p.map(([x, y]) => [420 + x / 2.24, 230 + y / 3]);
        const z6 = p => p.map(([x, y]) => [1000 + x / 2.613, 320 + y / 3]);
        const z7 = p => p.map(([x, y]) => [480 + x / 1.425, 720 + y / 3]);
        // quadratic through the midpoints so the curves don't look like polylines
        const line = (pts, col, w) => {
            let d = `M${pts[0]}`;
            for (let i = 1; i < pts.length - 1; i++) {
                const mx = (pts[i][0] + pts[i + 1][0]) / 2, my = (pts[i][1] + pts[i + 1][1]) / 2;
                d += `Q${pts[i]} ${mx},${my}`;
            }
            d += `L${pts[pts.length - 1]}`;
            return `<path d="${d}" stroke="${col}" stroke-width="${w}" stroke-linejoin="round"/>`;
        };

        svg += line([...z5([[185,605],[250,602],[280,598],[330,620],[380,655],[430,685],[490,705],[540,720],[600,740],[660,768],[780,762],[860,795],[950,815],[1020,848],[1100,860],[1180,870],[1250,888]]), ...z6([[0,630],[50,635],[120,660],[200,682],[280,705],[350,745],[420,775],[500,782],[600,780],[660,770],[720,767],[780,775],[860,795],[940,825],[1010,847]])], '#2323e0', 1.6);
        svg += line([...z5([[185,758],[215,733],[260,738],[330,745],[370,750],[420,775],[520,778],[580,795],[660,810],[700,795],[760,783],[800,790],[880,820],[950,850],[1030,905],[1090,908],[1140,935],[1200,975],[1290,990]]), ...z6([[85,730],[150,728],[205,735],[250,760],[300,778],[355,820],[420,838],[490,845],[550,848],[620,832],[680,810],[770,788],[850,790],[930,815],[1010,847]])], '#1f6fe8', 1.6);

        // candles
        candles.forEach((c, i) => {
            const x = X0 + i * STEP, col = c[4] ? GREEN : RED;
            svg += `<rect x="${x - 0.6}" y="${c[0]}" width="1.2" height="${c[3] - c[0]}" fill="${col}"/>`;
            svg += `<rect x="${x - 2.8}" y="${c[1]}" width="5.6" height="${Math.max(c[2] - c[1], 1.2)}" fill="${col}"/>`;
        });

        svg += line([...z5([[185,703],[210,728],[250,715],[300,722],[340,745],[390,765],[440,810],[480,840],[520,858],[570,862],[600,840],[660,825],[700,745],[770,678],[800,685],[830,750],[860,840],[900,945],[950,1040],[990,1105],[1030,1105],[1070,1040],[1110,975],[1170,870],[1220,910],[1260,920]]), ...z6([[0,705],[60,770],[125,840],[170,865],[220,875],[270,855],[335,855],[380,875],[430,865],[470,835],[520,820],[570,775],[620,770],[680,755],[720,725],[770,722],[820,760],[860,810],[900,910],[950,970],[1010,990]])], '#2196f3', 1.5);

        // last price
        svg += `<path d="M502 644H1464" stroke="${GREEN}" stroke-width="1" stroke-dasharray="2 3"/>`;

        // macd histogram, heights in 1/3 px
        const macd = [60,45,32,38,40,40,33,25,22,22,10,-5,-8,-15,-22,-25,-27,-28,-22,-20,-18,-15,-12,-7,5,30,38,40,35,35,58,88,115,103,90,75,55,17,-32,-72,-90,-115,-125,-118,-115,-105,-90,-95,-120,-110,-65,-40,3,65,110,115,110,92,90,105,105,80,50,20,14,14,6,-18,-30,-45,-35,-30,-50,-65,-65,-72,-60,-30,-20,2,17,20,22,20,13,4,6,4,12,35,55,72,75,60,40,45,45,32,55,50,45,35,30,32,35,45,46,46,30,8,-35,-60,-80,-105,-110,-105,-90,-75,-60,-40,-30,-28];
        macd.forEach((v, i) => {
            const prev = i ? macd[i - 1] : v;
            const col = v >= 0 ? (v >= prev ? '#1f9c86' : '#b2e5dc') : (v <= prev ? '#ff5252' : '#fccbcd');
            const h = Math.abs(v) / 3, y = v >= 0 ? 823.5 - h : 823.5;
            svg += `<rect x="${X0 + i * STEP - 2.7}" y="${y}" width="5.4" height="${h}" fill="${col}"/>`;
        });
        svg += line(z7([[32,382],[38,376],[55,388],[85,354],[105,358],[120,353],[140,378],[170,408],[200,432],[212,428],[245,440],[270,430],[290,385],[310,362],[328,355],[345,300],[365,205],[385,182],[400,190],[420,265],[445,390],[470,490],[490,535],[505,545],[530,635],[540,653],[550,652],[565,600],[590,420],[610,365],[625,360],[650,275],[665,285],[685,318],[715,330],[745,405],[760,395],[790,470],[812,510],[832,518],[865,450],[885,435],[905,437],[920,450],[945,445],[960,425],[990,325],[1003,315],[1020,328],[1050,270],[1070,262],[1095,268],[1120,235],[1147,200],[1160,210],[1180,300],[1210,390],[1235,482],[1250,485],[1270,497],[1292,483]]), '#2196f3', 1.5);
        svg += line(z7([[32,443],[60,415],[90,388],[130,373],[160,378],[200,403],[240,422],[275,428],[300,410],[335,370],[365,300],[390,250],[410,240],[430,260],[455,320],[490,410],[520,490],[545,560],[565,573],[585,550],[620,450],[650,370],[675,345],[715,333],[745,360],[770,385],[810,440],[840,470],[860,468],[900,452],[950,448],[980,410],[1005,373],[1035,345],[1065,310],[1110,280],[1160,238],[1175,240],[1205,295],[1240,385],[1265,435],[1292,458]]), '#f57c00', 1.6);

        // axis labels
        const label = (x, y, t, extra = '') => `<text x="${x}" y="${y}" fill="#777" font-size="17.500" letter-spacing=".5" ${extra}>${t}</text>`;
        [[351,'106250.0'],[393,'106000.0'],[436,'105750.0'],[479,'105500.0'],[522,'105250.0'],[564,'105000.0'],[607,'104750.0'],[692,'104250.0'],[735,'104000.0'],[768,'100.0'],[822,'0.0'],[876,'−100.0'],[930,'−200.0']]
            .forEach(([y, t]) => svg += label(1476, y + 6, t));
        [[557,'12:00'],[733,'18:00'],[1085,'06:00'],[1262,'12:00'],[1437,'18:00']].forEach(([x, t]) => svg += label(x, 983, t, 'text-anchor="middle"'));
        svg += label(909, 983, '5', 'text-anchor="middle" font-weight="700"');
        // settings hexagon
        svg += '<path d="M1517 967l9 5v10l-9 5-9-5v-10z" stroke="#9a9a9a" stroke-width="1.400"/><circle cx="1517" cy="977" r="3" stroke="#9a9a9a" stroke-width="1.400"/>';

        document.getElementById('chart').innerHTML = svg;
    </script>
</body>
</html>
